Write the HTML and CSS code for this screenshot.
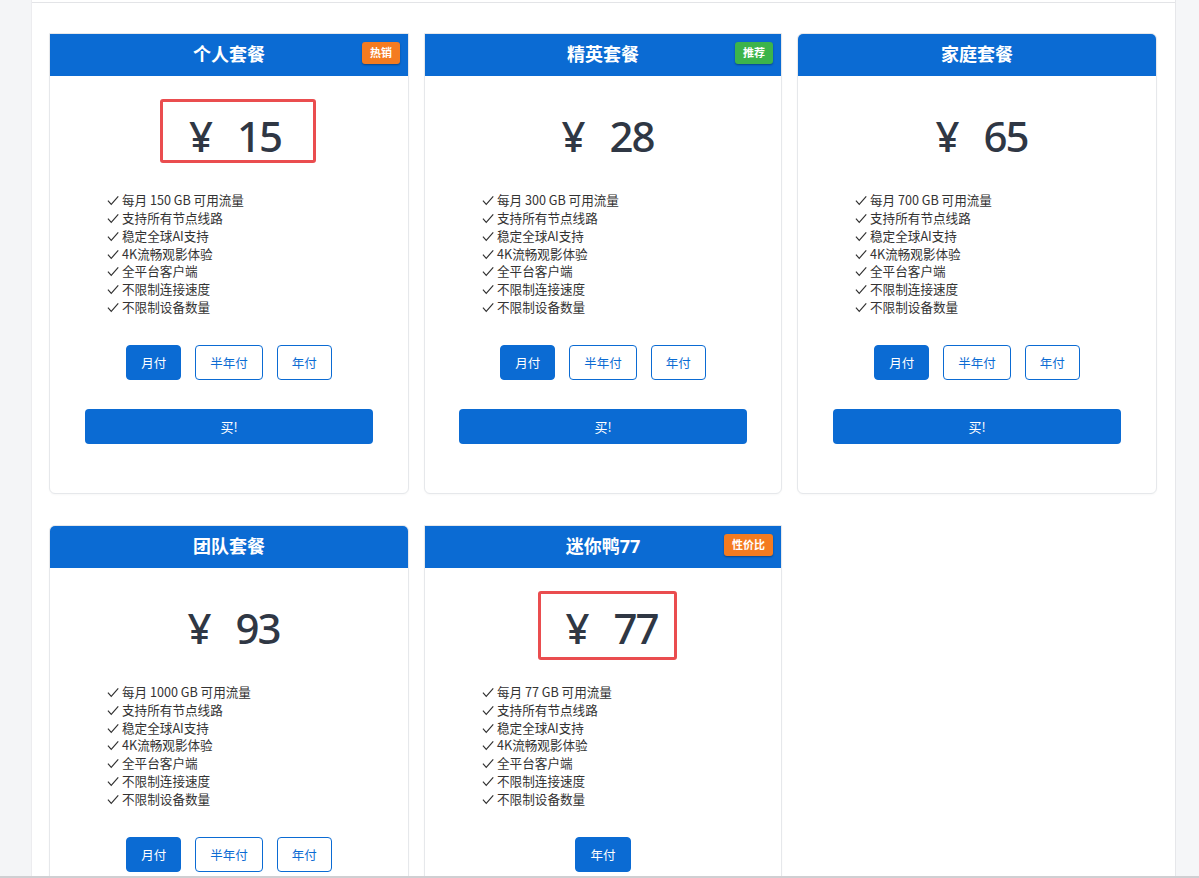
FILE: index.html
```html
<!DOCTYPE html>
<html lang="zh-CN">
<head>
<meta charset="utf-8">
<title>套餐</title>
<link rel="stylesheet" href="styles.css">
</head>
<body>
<div class="page">
  <aside class="strip-left"></aside>
  <main class="main">
    <div class="topline"></div>
    <div class="grid">

      <section class="card card-square">
        <header class="card-head">个人套餐<span class="badge badge-orange">热销</span></header>
        <div class="price-wrap"><div class="price price-mark price-mark-a"><span class="cur">¥</span><span class="num">15</span></div></div>
        <ul class="features">
          <li><svg class="check" viewBox="0 0 13 11"><path d="M1 5.6 L4.6 9.6 L12.2 1"/></svg>每月 150 GB 可用流量</li>
          <li><svg class="check" viewBox="0 0 13 11"><path d="M1 5.6 L4.6 9.6 L12.2 1"/></svg>支持所有节点线路</li>
          <li><svg class="check" viewBox="0 0 13 11"><path d="M1 5.6 L4.6 9.6 L12.2 1"/></svg>稳定全球AI支持</li>
          <li><svg class="check" viewBox="0 0 13 11"><path d="M1 5.6 L4.6 9.6 L12.2 1"/></svg>4K流畅观影体验</li>
          <li><svg class="check" viewBox="0 0 13 11"><path d="M1 5.6 L4.6 9.6 L12.2 1"/></svg>全平台客户端</li>
          <li><svg class="check" viewBox="0 0 13 11"><path d="M1 5.6 L4.6 9.6 L12.2 1"/></svg>不限制连接速度</li>
          <li><svg class="check" viewBox="0 0 13 11"><path d="M1 5.6 L4.6 9.6 L12.2 1"/></svg>不限制设备数量</li>
        </ul>
        <div class="cycles">
          <button class="cycle cycle-on">月付</button>
          <button class="cycle">半年付</button>
          <button class="cycle">年付</button>
        </div>
        <button class="buy">买!</button>
      </section>

      <section class="card card-square">
        <header class="card-head">精英套餐<span class="badge badge-green">推荐</span></header>
        <div class="price-wrap"><div class="price"><span class="cur">¥</span><span class="num">28</span></div></div>
        <ul class="features">
          <li><svg class="check" viewBox="0 0 13 11"><path d="M1 5.6 L4.6 9.6 L12.2 1"/></svg>每月 300 GB 可用流量</li>
          <li><svg class="check" viewBox="0 0 13 11"><path d="M1 5.6 L4.6 9.6 L12.2 1"/></svg>支持所有节点线路</li>
          <li><svg class="check" viewBox="0 0 13 11"><path d="M1 5.6 L4.6 9.6 L12.2 1"/></svg>稳定全球AI支持</li>
          <li><svg class="check" viewBox="0 0 13 11"><path d="M1 5.6 L4.6 9.6 L12.2 1"/></svg>4K流畅观影体验</li>
          <li><svg class="check" viewBox="0 0 13 11"><path d="M1 5.6 L4.6 9.6 L12.2 1"/></svg>全平台客户端</li>
          <li><svg class="check" viewBox="0 0 13 11"><path d="M1 5.6 L4.6 9.6 L12.2 1"/></svg>不限制连接速度</li>
          <li><svg class="check" viewBox="0 0 13 11"><path d="M1 5.6 L4.6 9.6 L12.2 1"/></svg>不限制设备数量</li>
        </ul>
        <div class="cycles">
          <button class="cycle cycle-on">月付</button>
          <button class="cycle">半年付</button>
          <button class="cycle">年付</button>
        </div>
        <button class="buy">买!</button>
      </section>

      <section class="card">
        <header class="card-head">家庭套餐</header>
        <div class="price-wrap"><div class="price"><span class="cur">¥</span><span class="num">65</span></div></div>
        <ul class="features">
          <li><svg class="check" viewBox="0 0 13 11"><path d="M1 5.6 L4.6 9.6 L12.2 1"/></svg>每月 700 GB 可用流量</li>
          <li><svg class="check" viewBox="0 0 13 11"><path d="M1 5.6 L4.6 9.6 L12.2 1"/></svg>支持所有节点线路</li>
          <li><svg class="check" viewBox="0 0 13 11"><path d="M1 5.6 L4.6 9.6 L12.2 1"/></svg>稳定全球AI支持</li>
          <li><svg class="check" viewBox="0 0 13 11"><path d="M1 5.6 L4.6 9.6 L12.2 1"/></svg>4K流畅观影体验</li>
          <li><svg class="check" viewBox="0 0 13 11"><path d="M1 5.6 L4.6 9.6 L12.2 1"/></svg>全平台客户端</li>
          <li><svg class="check" viewBox="0 0 13 11"><path d="M1 5.6 L4.6 9.6 L12.2 1"/></svg>不限制连接速度</li>
          <li><svg class="check" viewBox="0 0 13 11"><path d="M1 5.6 L4.6 9.6 L12.2 1"/></svg>不限制设备数量</li>
        </ul>
        <div class="cycles">
          <button class="cycle cycle-on">月付</button>
          <button class="cycle">半年付</button>
          <button class="cycle">年付</button>
        </div>
        <button class="buy">买!</button>
      </section>

      <section class="card">
        <header class="card-head">团队套餐</header>
        <div class="price-wrap"><div class="price"><span class="cur">¥</span><span class="num">93</span></div></div>
        <ul class="features">
          <li><svg class="check" viewBox="0 0 13 11"><path d="M1 5.6 L4.6 9.6 L12.2 1"/></svg>每月 1000 GB 可用流量</li>
          <li><svg class="check" viewBox="0 0 13 11"><path d="M1 5.6 L4.6 9.6 L12.2 1"/></svg>支持所有节点线路</li>
          <li><svg class="check" viewBox="0 0 13 11"><path d="M1 5.6 L4.6 9.6 L12.2 1"/></svg>稳定全球AI支持</li>
          <li><svg class="check" viewBox="0 0 13 11"><path d="M1 5.6 L4.6 9.6 L12.2 1"/></svg>4K流畅观影体验</li>
          <li><svg class="check" viewBox="0 0 13 11"><path d="M1 5.6 L4.6 9.6 L12.2 1"/></svg>全平台客户端</li>
          <li><svg class="check" viewBox="0 0 13 11"><path d="M1 5.6 L4.6 9.6 L12.2 1"/></svg>不限制连接速度</li>
          <li><svg class="check" viewBox="0 0 13 11"><path d="M1 5.6 L4.6 9.6 L12.2 1"/></svg>不限制设备数量</li>
        </ul>
        <div class="cycles">
          <button class="cycle cycle-on">月付</button>
          <button class="cycle">半年付</button>
          <button class="cycle">年付</button>
        </div>
        <button class="buy">买!</button>
      </section>

      <section class="card card-square">
        <header class="card-head">迷你鸭77<span class="badge badge-orange">性价比</span></header>
        <div class="price-wrap"><div class="price price-mark price-mark-b"><span class="cur">¥</span><span class="num">77</span></div></div>
        <ul class="features">
          <li><svg class="check" viewBox="0 0 13 11"><path d="M1 5.6 L4.6 9.6 L12.2 1"/></svg>每月 77 GB 可用流量</li>
          <li><svg class="check" viewBox="0 0 13 11"><path d="M1 5.6 L4.6 9.6 L12.2 1"/></svg>支持所有节点线路</li>
          <li><svg class="check" viewBox="0 0 13 11"><path d="M1 5.6 L4.6 9.6 L12.2 1"/></svg>稳定全球AI支持</li>
          <li><svg class="check" viewBox="0 0 13 11"><path d="M1 5.6 L4.6 9.6 L12.2 1"/></svg>4K流畅观影体验</li>
          <li><svg class="check" viewBox="0 0 13 11"><path d="M1 5.6 L4.6 9.6 L12.2 1"/></svg>全平台客户端</li>
          <li><svg class="check" viewBox="0 0 13 11"><path d="M1 5.6 L4.6 9.6 L12.2 1"/></svg>不限制连接速度</li>
          <li><svg class="check" viewBox="0 0 13 11"><path d="M1 5.6 L4.6 9.6 L12.2 1"/></svg>不限制设备数量</li>
        </ul>
        <div class="cycles">
          <button class="cycle cycle-on">年付</button>
        </div>
        <button class="buy">买!</button>
      </section>

    </div>
  </main>
  <aside class="strip-right"></aside>
</div>
<div class="bottom-edge"></div>
</body>
</html>
```

FILE: styles.css
```css
* { box-sizing: border-box; }

html, body {
  margin: 0;
  padding: 0;
  background: #f4f5f7;
  font-family: "Noto Sans", "Noto Sans CJK SC", sans-serif;
  color: #333;
}

.page {
  display: flex;
  min-height: 878px;
}

.strip-left {
  width: 32px;
  flex: none;
  background: #f4f5f7;
  border-right: 1px solid #ececef;
}

.main {
  width: 1144px;
  flex: none;
  background: #fff;
  border-right: 1px solid #e6e7ea;
}

.strip-right {
  flex: 1;
  background: #f5f6f8;
}

.topline {
  height: 3px;
  border-bottom: 1px solid #e3e4e7;
}

.grid {
  display: grid;
  grid-template-columns: 360px 358px 360px;
  column-gap: 15px;
  row-gap: 31px;
  padding: 30px 0 0 17px;
  align-items: start;
}

.card {
  background: #fff;
  border: 1px solid #e6e8eb;
  border-radius: 6px;
  overflow: hidden;
  padding-bottom: 49px;
  box-shadow: 0 1px 2px rgba(0, 0, 0, 0.03);
}

.card-square {
  border-top-left-radius: 0;
  border-top-right-radius: 0;
}

.card-head {
  position: relative;
  height: 43px;
  line-height: 43px;
  background: #0b6bd3;
  color: #fff;
  text-align: center;
  font-size: 18px;
  font-weight: 700;
  margin: -1px -1px 0;
}

.badge {
  position: absolute;
  top: 9px;
  right: 9px;
  height: 22px;
  line-height: 22px;
  padding: 0 8px;
  font-size: 11px;
  font-weight: 700;
  color: #fff;
  border-radius: 3px;
  box-shadow: 0 1px 2px rgba(0, 0, 0, 0.35);
}

.badge-orange { background: #f47b20; }
.badge-green { background: #3cb44b; }

.price-wrap {
  display: flex;
  justify-content: center;
  margin-top: 23px;
  height: 64px;
}

.price {
  width: 139px;
  height: 64px;
  line-height: 48px;
  padding: 10px 0 0 25px;
  border: 3px solid transparent;
  font-size: 42px;
  color: #2f3744;
  font-weight: 500;
  white-space: nowrap;
  text-align: left;
}

.cur {
  margin-right: 24px;
}

.num {
  letter-spacing: -2px;
}

.price-mark {
  border-color: #ea4d4f;
  border-radius: 3px;
}

.price-mark-a {
  width: 156px;
  padding-left: 26px;
  transform: translateX(9px);
}

.price-mark-b {
  height: 69px;
  transform: translateX(4px);
}

.features {
  list-style: none;
  margin: 28px 0 0;
  padding: 0 0 0 57px;
  font-size: 12.6px;
  line-height: 17.85px;
  font-family: "Noto Sans CJK SC", "Noto Sans", sans-serif;
  color: #333;
}

.check {
  width: 12px;
  height: 11px;
  margin-right: 3px;
  vertical-align: -1px;
  fill: none;
  stroke: #333;
  stroke-width: 1.3;
}

.cycles {
  display: flex;
  justify-content: center;
  gap: 14px;
  margin-top: 29px;
}

.cycle {
  height: 35px;
  padding: 0 14px;
  border: 1px solid #0b6bd3;
  border-radius: 4px;
  background: #fff;
  color: #0b6bd3;
  font-size: 12.5px;
  font-family: "Noto Sans CJK SC", sans-serif;
  cursor: pointer;
}

.cycle-on {
  background: #0b6bd3;
  color: #fff;
}

.buy {
  display: block;
  width: 288px;
  height: 35px;
  margin: 29px auto 0;
  border: none;
  border-radius: 4px;
  background: #0b6bd3;
  color: #fff;
  font-size: 13px;
  font-family: "Noto Sans CJK SC", sans-serif;
  cursor: pointer;
}

.bottom-edge {
  position: fixed;
  left: 0;
  right: 0;
  bottom: 0;
  height: 2px;
  background: #cfcfd2;
}
```
